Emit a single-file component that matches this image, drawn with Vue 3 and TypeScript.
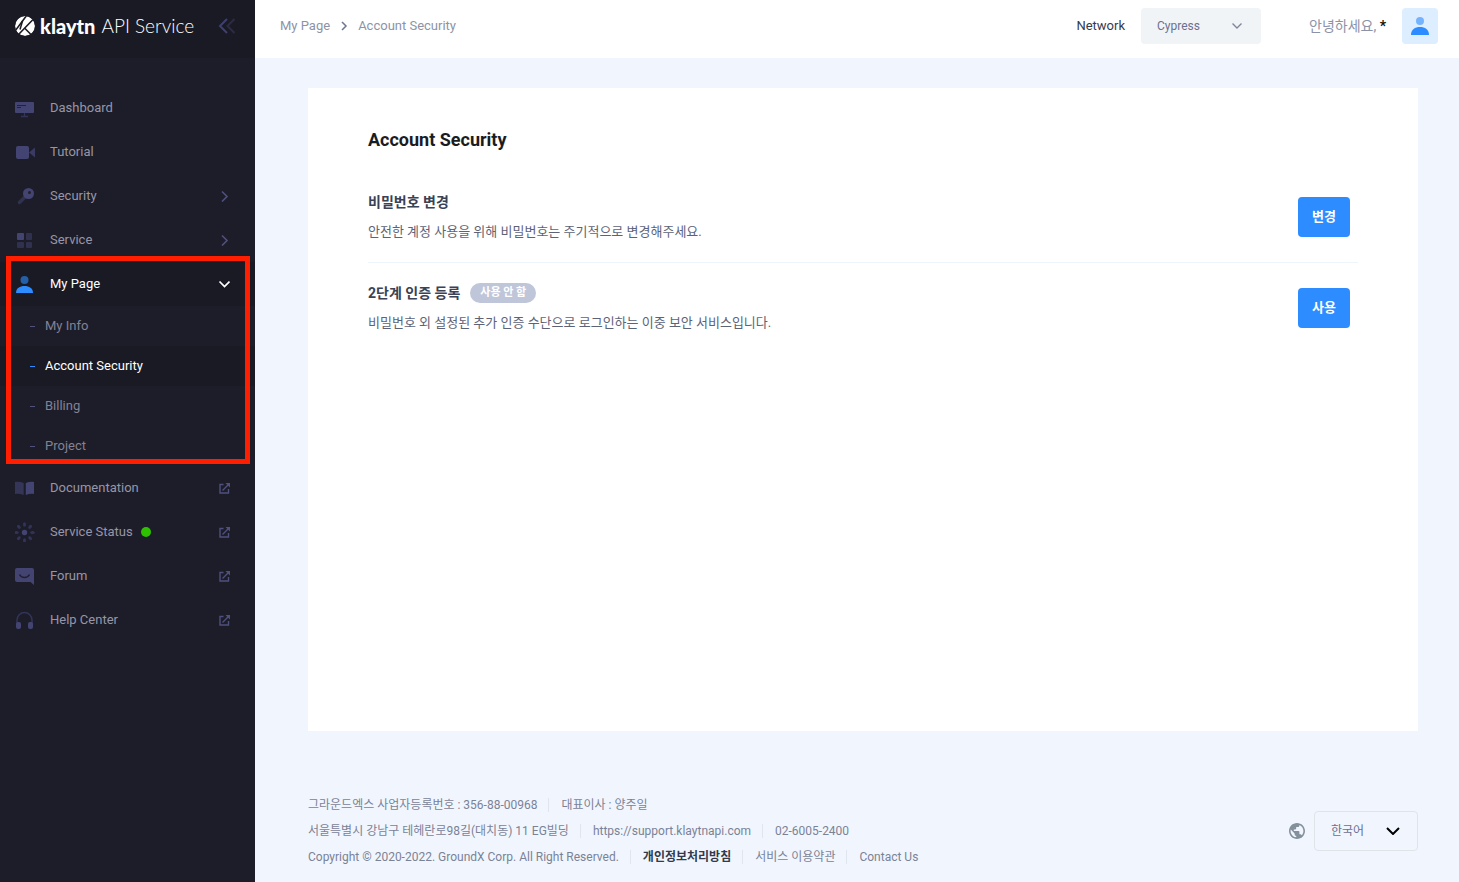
<script setup lang="ts">
import { ref } from 'vue'

type IconName = 'dashboard' | 'tutorial' | 'security' | 'service' | 'user' | 'docs' | 'status' | 'forum' | 'help'

interface MenuItem {
  label: string
  icon: IconName
  kind: 'link' | 'group' | 'external'
  online?: boolean
}

const topItems: MenuItem[] = [
  { label: 'Dashboard', icon: 'dashboard', kind: 'link' },
  { label: 'Tutorial', icon: 'tutorial', kind: 'link' },
  { label: 'Security', icon: 'security', kind: 'group' },
  { label: 'Service', icon: 'service', kind: 'group' },
]

const bottomItems: MenuItem[] = [
  { label: 'Documentation', icon: 'docs', kind: 'external' },
  { label: 'Service Status', icon: 'status', kind: 'external', online: true },
  { label: 'Forum', icon: 'forum', kind: 'external' },
  { label: 'Help Center', icon: 'help', kind: 'external' },
]

const subItems: string[] = ['My Info', 'Account Security', 'Billing', 'Project']
const current = ref<string>('Account Security')
const network = ref<string>('Cypress')
const language = ref<string>('ko')
const rays: number[] = [0, 45, 90, 135, 180, 225, 270, 315]
</script>

<template>
  <div class="layout">
    <aside class="sidebar">
      <div class="brand">
        <a href="#" class="logo" aria-label="klaytn API Service">
          <svg class="logo-mark" viewBox="0 0 20 20" aria-hidden="true">
            <circle cx="10" cy="10" r="10" fill="#fff" />
            <path d="M0 15L12 -1M3.500 18.500L19 2.500M9.500 12L16.500 19" fill="none" stroke="#1a1a24" stroke-width="1.600" />
            <path d="M7.500 5L5 13.500" fill="none" stroke="#1a1a24" stroke-width="1.500" />
          </svg>
          <span class="logo-name">klaytn</span>
          <span class="logo-sub">API Service</span>
        </a>
        <button type="button" class="collapse" aria-label="Collapse menu">
          <svg viewBox="0 0 18 16" width="18" height="16" fill="none" stroke-width="2">
            <path d="M9 1L2 8l7 7" stroke="#3f3f70" />
            <path d="M16.500 1l-7 7 7 7" stroke="#2b2b44" />
          </svg>
        </button>
      </div>

      <nav class="menu">
        <component
          :is="item.kind === 'group' ? 'button' : 'a'"
          v-for="item in topItems"
          :key="item.label"
          class="item"
          :href="item.kind === 'group' ? undefined : '#'"
          :type="item.kind === 'group' ? 'button' : undefined"
        >
          <svg class="icon" viewBox="0 0 20 20" aria-hidden="true">
            <template v-if="item.icon === 'dashboard'">
              <rect x="0" y="4" width="19" height="11" rx="1" fill="#444472" />
              <path d="M2 7.500h9M2 9.500h4" stroke="#222238" stroke-width="1" />
              <path d="M9.500 15v3M6 18.500h7" stroke="#33335a" stroke-width="1.300" />
            </template>
            <template v-else-if="item.icon === 'tutorial'">
              <rect x="1" y="4" width="13" height="13" rx="2" fill="#444472" />
              <path d="M14 10.500L20 5.500v10z" fill="#3a3a63" />
            </template>
            <template v-else-if="item.icon === 'security'">
              <path d="M9.500 11.500L4.500 16.500" stroke="#30304f" stroke-width="3.500" stroke-linecap="round" />
              <circle cx="13.500" cy="7.500" r="5.500" fill="#444472" />
              <circle cx="14.500" cy="6.500" r="1.500" fill="#20202d" />
            </template>
            <template v-else>
              <rect x="2" y="3" width="7" height="7" rx="1" fill="#444472" />
              <rect x="11" y="3" width="6" height="7" rx="1" fill="#30304f" />
              <rect x="2" y="12" width="7" height="6" rx="1" fill="#30304f" />
              <rect x="11" y="12" width="6" height="6" rx="1" fill="#30304f" />
            </template>
          </svg>
          <span>{{ item.label }}</span>
          <svg v-if="item.kind === 'group'" class="trail" viewBox="0 0 12 12" aria-hidden="true">
            <path d="M4 1.500L9 6.500L4 11.500" fill="none" stroke="#50507e" stroke-width="1.600" />
          </svg>
        </component>

        <div class="group">
          <button type="button" class="item open" aria-expanded="true">
            <svg class="icon" viewBox="0 0 20 20" aria-hidden="true">
              <circle cx="9.500" cy="6" r="4" fill="#2460a8" />
              <path d="M1 19c0-5 4-7 8.500-7s8.500 2 8.500 7z" fill="#2d8cff" />
            </svg>
            <span>My Page</span>
            <svg class="trail" viewBox="0 0 12 12" aria-hidden="true">
              <path d="M1.500 3.500l5 5 5-5" fill="none" stroke="#fff" stroke-width="1.700" />
            </svg>
          </button>
          <a
            v-for="sub in subItems"
            :key="sub"
            href="#"
            class="sub"
            :class="{ active: sub === current }"
            @click.prevent="current = sub"
          >{{ sub }}</a>
          <div class="highlight"></div>
        </div>

        <a v-for="item in bottomItems" :key="item.label" href="#" class="item">
          <svg class="icon" viewBox="0 0 20 20" aria-hidden="true">
            <template v-if="item.icon === 'docs'">
              <path d="M0 4c3-.5 6 0 8.700 1v12c-2.700-1-5.700-1.500-8.700-1z" fill="#353558" />
              <path d="M19 4c-3-.5-5.500 0-8.200 1v12c2.700-1 5.200-1.500 8.200-1z" fill="#444472" />
            </template>
            <template v-else-if="item.icon === 'status'">
              <circle cx="9.500" cy="10.500" r="2.700" fill="#444472" />
              <ellipse
                v-for="angle in rays"
                :key="angle"
                cx="9.500"
                cy="2.500"
                rx="1.500"
                ry="2.200"
                fill="#33335a"
                :transform="`rotate(${angle} 9.500 10.500)`"
              />
            </template>
            <template v-else-if="item.icon === 'forum'">
              <path d="M2 2h15a2 2 0 0 1 2 2v15l-3.500-3H2a2 2 0 0 1-2-2V4a2 2 0 0 1 2-2z" fill="#444472" />
              <path d="M4.500 8.500c2 4 8 4 10 0" fill="none" stroke="#20202d" stroke-width="1.500" />
            </template>
            <template v-else>
              <path d="M2 15V10a7.500 7.500 0 0 1 15 0v5" fill="none" stroke="#33335a" stroke-width="1.500" />
              <rect x="1" y="12" width="5" height="7" rx="2" fill="#444472" />
              <rect x="13" y="12" width="5" height="7" rx="2" fill="#444472" />
            </template>
          </svg>
          <span>{{ item.label }}</span>
          <i v-if="item.online" class="online"></i>
          <svg class="trail" viewBox="0 0 12 12" aria-hidden="true">
            <path d="M5.500 2.500H2v8.500H10.500V7M4.500 8.500L10.500 2.500" fill="none" stroke="#50507e" stroke-width="1.400" />
            <path d="M7.500 1h4.500v4.500z" fill="#50507e" />
          </svg>
        </a>
      </nav>
    </aside>

    <div class="page">
      <header class="topbar">
        <nav class="crumbs" aria-label="Breadcrumb">
          <a href="#">My Page</a>
          <svg viewBox="0 0 8 10" width="8" height="10" aria-hidden="true">
            <path d="M2 1l4 4-4 4" fill="none" stroke="#6f7590" stroke-width="1.500" />
          </svg>
          <a href="#">Account Security</a>
        </nav>
        <label class="net-label" for="network">Network</label>
        <div class="select network">
          <select id="network" v-model="network">
            <option>Cypress</option>
            <option>Baobab</option>
          </select>
          <svg viewBox="0 0 10 6" width="10" height="6" aria-hidden="true">
            <path d="M.5 .5L5 5L9.500 .5" fill="none" stroke="#7f869c" stroke-width="1.400" />
          </svg>
        </div>
        <span class="hello">안녕하세요, <b>*</b></span>
        <button type="button" class="avatar" aria-label="Account">
          <svg viewBox="0 0 18 18" width="18" height="18">
            <circle cx="9" cy="4" r="4" fill="#75b3ff" />
            <path d="M0 18c0-5.500 4-8 9-8s9 2.500 9 8z" fill="#2d8cff" />
          </svg>
        </button>
      </header>

      <main class="card">
        <h1>Account Security</h1>
        <section class="row">
          <div>
            <h2>비밀번호 변경</h2>
            <p>안전한 계정 사용을 위해 비밀번호는 주기적으로 변경해주세요.</p>
          </div>
          <button type="button" class="action">변경</button>
        </section>
        <section class="row">
          <div>
            <h2>2단계 인증 등록 <span class="badge">사용 안 함</span></h2>
            <p>비밀번호 외 설정된 추가 인증 수단으로 로그인하는 이중 보안 서비스입니다.</p>
          </div>
          <button type="button" class="action">사용</button>
        </section>
      </main>

      <footer class="footer">
        <div class="legal">
          <div class="line">
            <span>그라운드엑스 사업자등록번호 : 356-88-00968</span>
            <span>대표이사 : 양주일</span>
          </div>
          <div class="line">
            <span>서울특별시 강남구 테헤란로98길(대치동) 11 EG빌딩</span>
            <a href="#">https://support.klaytnapi.com</a>
            <span>02-6005-2400</span>
          </div>
          <div class="line">
            <span>Copyright © 2020-2022. GroundX Corp. All Right Reserved.</span>
            <a href="#" class="strong">개인정보처리방침</a>
            <a href="#">서비스 이용약관</a>
            <a href="#">Contact Us</a>
          </div>
        </div>
        <svg class="globe" viewBox="2 2 20 20" aria-hidden="true">
          <path fill="#84909c" d="M12 2C6.480 2 2 6.480 2 12s4.480 10 10 10 10-4.480 10-10S17.520 2 12 2zm-1 17.930c-3.950-.490-7-3.850-7-7.930 0-.620.080-1.210.210-1.790L9 15v1c0 1.100.900 2 2 2v1.930zm6.900-2.540c-.260-.810-1-1.390-1.900-1.390h-1v-3c0-.550-.450-1-1-1H8v-2h2c.550 0 1-.450 1-1V7h2c1.100 0 2-.900 2-2v-.410c2.930 1.190 5 4.060 5 7.410 0 2.080-.800 3.970-2.100 5.390z" />
        </svg>
        <div class="select language">
          <select v-model="language" aria-label="언어">
            <option value="ko">한국어</option>
            <option value="en">English</option>
          </select>
          <svg viewBox="0 0 14 8" width="14" height="8" aria-hidden="true">
            <path d="M1 1l6 6 6-6" fill="none" stroke="#000" stroke-width="2" />
          </svg>
        </div>
      </footer>
    </div>
  </div>
</template>

<style>
body {
  margin: 0;
  background: #f1f6fe;
}
</style>

<style scoped>
.layout {
  display: flex;
  min-height: 100vh;
  font-family: Roboto, 'Noto Sans CJK KR', sans-serif;
  font-size: 13px;
  line-height: 20px;
}

.layout *,
.layout *::before {
  box-sizing: border-box;
}

a {
  color: inherit;
  text-decoration: none;
}

button,
select {
  margin: 0;
  border: 0;
  font: inherit;
  cursor: pointer;
}

.sidebar {
  flex: none;
  width: 255px;
  background: #1d1d29;
  color: #9696a8;
}

.brand {
  display: flex;
  align-items: center;
  justify-content: space-between;
  height: 58px;
  padding: 0 19px 6px 15px;
  background: #1a1a24;
}

.logo {
  display: flex;
  align-items: center;
  color: #fff;
  font-family: Lato, sans-serif;
  font-size: 19px;
  white-space: nowrap;
}

.logo-mark {
  width: 20px;
  height: 20px;
  margin-right: 5px;
  border-radius: 50%;
}

.logo-name {
  margin-right: 6px;
  font-size: 20px;
  font-weight: 900;
}

.logo-sub {
  font-weight: 300;
}

.collapse {
  display: flex;
  padding: 0;
  background: none;
}

.menu {
  padding-top: 28px;
}

.item {
  display: flex;
  align-items: center;
  width: 100%;
  height: 44px;
  padding: 0 25px 0 15px;
  background: none;
  color: inherit;
  text-align: left;
}

.item.open {
  background: #1a1a24;
  color: #fff;
}

.icon {
  width: 20px;
  height: 20px;
  margin-right: 15px;
}

.trail {
  width: 12px;
  height: 12px;
  margin-left: auto;
}

.online {
  width: 10px;
  height: 10px;
  margin-left: 8px;
  border-radius: 50%;
  background: #2dc100;
}

.group {
  position: relative;
}

.sub {
  display: flex;
  align-items: center;
  height: 40px;
  padding-left: 30px;
  color: #828295;
}

.sub::before {
  width: 5px;
  height: 1px;
  margin-right: 10px;
  background: #50507e;
  content: '';
}

.sub.active {
  background: #1a1a24;
  color: #fff;
}

.sub.active::before {
  background: #2d8cff;
}

.highlight {
  position: absolute;
  inset: -6px 5px 2px 6px;
  border: 5px solid #ff1e00;
  pointer-events: none;
}

.page {
  display: flex;
  flex: 1;
  flex-direction: column;
  min-width: 0;
  background: #f1f6fe;
}

.topbar {
  display: flex;
  align-items: center;
  height: 58px;
  padding: 0 21px 6px 25px;
  background: #fff;
}

.crumbs {
  display: flex;
  flex: 1;
  align-items: center;
  gap: 10px;
  color: #8c93a8;
}

.net-label {
  margin-right: 16px;
  color: #343a4c;
}

.select {
  position: relative;
  display: flex;
  align-items: center;
}

.select select {
  width: 100%;
  height: 100%;
  padding: 0 16px;
  border-radius: 4px;
  appearance: none;
  color: #6c7090;
  font-size: 12px;
}

.select svg {
  position: absolute;
  right: 19px;
  pointer-events: none;
}

.network {
  width: 120px;
  height: 36px;
  margin-right: 48px;
}

.network select {
  background: #f0f4f7;
}

.hello {
  margin-right: 16px;
  color: #8c93a8;
  font-size: 14px;
}

.hello b {
  color: #111;
}

.avatar {
  display: flex;
  align-items: center;
  justify-content: center;
  width: 36px;
  height: 36px;
  padding: 0;
  border-radius: 4px;
  background: #dceeff;
}

.card {
  flex: 1;
  margin: 30px 41px 0 53px;
  padding: 40px 60px;
  background: #fff;
}

h1 {
  margin: 0 0 20px;
  color: #1c1c1f;
  font-size: 18px;
  line-height: 24px;
}

.row {
  display: flex;
  align-items: center;
  justify-content: space-between;
  padding: 20px 8px 20px 0;
}

.row + .row {
  border-top: 1px solid #eef5fb;
}

h2 {
  display: flex;
  align-items: center;
  gap: 10px;
  margin: 0 0 10px;
  color: #3a4254;
  font-size: 14px;
  line-height: 20px;
}

p {
  margin: 0;
  color: #5d6377;
}

.badge {
  padding: 0 10px;
  border-radius: 10px;
  background: #bfc6da;
  color: #fff;
  font-size: 11px;
}

.action {
  width: 52px;
  height: 40px;
  padding: 0;
  border-radius: 4px;
  background: #2d8cff;
  color: #fff;
  font-weight: 700;
}

.footer {
  display: flex;
  align-items: center;
  margin: 61px 41px 12px 53px;
  color: #7b8296;
  font-size: 12px;
}

.legal {
  flex: 1;
}

.line {
  display: flex;
  align-items: center;
  height: 26px;
}

.line > * + * {
  display: flex;
  align-items: center;
}

.line > * + *::before {
  width: 1px;
  height: 14px;
  margin: 0 12px 0 11px;
  background: #e0e6ee;
  content: '';
}

.strong {
  color: #343a4c;
  font-weight: 700;
}

.globe {
  width: 16px;
  height: 16px;
  margin-right: 9px;
}

.language {
  width: 104px;
  height: 40px;
}

.language select {
  border: 1px solid #dfe4e8;
  background: transparent;
}

.language svg {
  right: 18px;
}
</style>
